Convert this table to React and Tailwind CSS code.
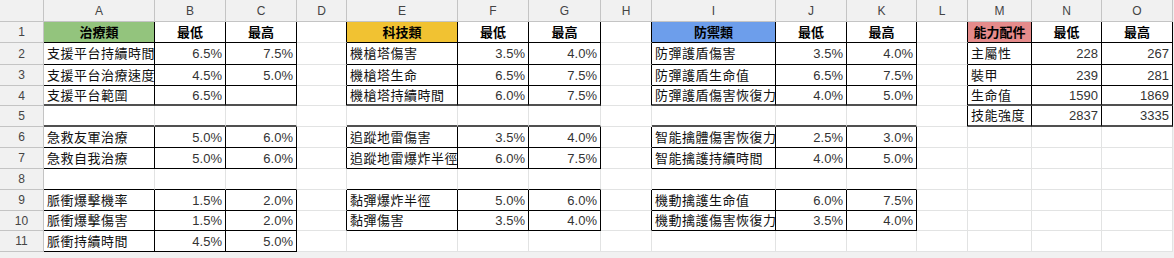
import React from "react";

const COLS = ["A", "B", "C", "D", "E", "F", "G", "H", "I", "J", "K", "L", "M", "N", "O"];

// [colStart, colEnd, rowStart, rowEnd]
const BLOCKS = [
  [0, 2, 1, 4],
  [0, 2, 6, 7],
  [0, 2, 9, 11],
  [4, 6, 1, 4],
  [4, 6, 6, 7],
  [4, 6, 9, 10],
  [8, 10, 1, 4],
  [8, 10, 6, 7],
  [8, 10, 9, 10],
  [12, 14, 1, 5],
];

const inBlock = (c, r) =>
  BLOCKS.some(([c0, c1, r0, r1]) => c >= c0 && c <= c1 && r >= r0 && r <= r1);

const HEAD_BG = {
  A1: "bg-[#93c47d]",
  E1: "bg-[#f1c232]",
  I1: "bg-[#6d9eeb]",
  M1: "bg-[#e58b8b]",
};

const rowsData = {
  1: ["治療類", "最低", "最高", "", "科技類", "最低", "最高", "", "防禦類", "最低", "最高", "", "能力配件", "最低", "最高"],
  2: ["支援平台持續時間", "6.5%", "7.5%", "", "機槍塔傷害", "3.5%", "4.0%", "", "防彈護盾傷害", "3.5%", "4.0%", "", "主屬性", "228", "267"],
  3: ["支援平台治療速度", "4.5%", "5.0%", "", "機槍塔生命", "6.5%", "7.5%", "", "防彈護盾生命值", "6.5%", "7.5%", "", "裝甲", "239", "281"],
  4: ["支援平台範圍", "6.5%", "", "", "機槍塔持續時間", "6.0%", "7.5%", "", "防彈護盾傷害恢復力", "4.0%", "5.0%", "", "生命值", "1590", "1869"],
  5: ["", "", "", "", "", "", "", "", "", "", "", "", "技能強度", "2837", "3335"],
  6: ["急救友軍治療", "5.0%", "6.0%", "", "追蹤地雷傷害", "3.5%", "4.0%", "", "智能擒體傷害恢復力", "2.5%", "3.0%", "", "", "", ""],
  7: ["急救自我治療", "5.0%", "6.0%", "", "追蹤地雷爆炸半徑", "6.0%", "7.5%", "", "智能擒護持續時間", "4.0%", "5.0%", "", "", "", ""],
  8: [],
  9: ["脈衝爆擊機率", "1.5%", "2.0%", "", "黏彈爆炸半徑", "5.0%", "6.0%", "", "機動擒護生命值", "6.0%", "7.5%", "", "", "", ""],
  10: ["脈衝爆擊傷害", "1.5%", "2.0%", "", "黏彈傷害", "3.5%", "4.0%", "", "機動擒護傷害恢復力", "3.5%", "4.0%", "", "", "", ""],
  11: ["脈衝持續時間", "4.5%", "5.0%", "", "", "", "", "", "", "", "", "", "", "", ""],
};

const Cell = ({ c, r }) => {
  const text = (rowsData[r] || [])[c] || "";
  const here = inBlock(c, r);
  const rightBlack = here || inBlock(c + 1, r);
  const bottomBlack = here || inBlock(c, r + 1);
  const thick = bottomBlack && (r === 4 || r === 5);
  const isHead = r === 1 && here;
  const isLabel = c % 4 === 0;
  const bg = HEAD_BG[`${COLS[c]}${r}`] || "bg-white";

  const borders = `border-r ${rightBlack ? "border-r-black" : "border-r-[#e2e3e3]"} ${
    thick
      ? "border-b-2 border-b-[#505050]"
      : bottomBlack
        ? "border-b border-b-black"
        : "border-b border-b-[#e2e3e3]"
  }`;

  const align = isHead
    ? "justify-center font-bold text-black"
    : isLabel
      ? "justify-start pl-[3px] text-[#111] tracking-[0.5px]"
      : "justify-end pr-[3px] text-[#333]";

  return (
    <div
      className={`flex items-center overflow-hidden whitespace-nowrap text-[13px] leading-none ${bg} ${borders} ${align}`}
    >
      {text}
    </div>
  );
};

export default function App() {
  const rows = Array.from({ length: 11 }, (_, i) => i + 1);

  return (
    <div
      className="h-[258px] w-[1174px] overflow-hidden bg-[#f1f1f1]"
      style={{ fontFamily: '"Liberation Sans", "Noto Sans CJK TC", sans-serif' }}
    >
      <div className="grid grid-cols-[44px_111px_71px_71px_50px_111px_71px_72px_51px_124px_71px_70px_51px_64px_70px_71px] grid-rows-[22px_21px_22px_21px_20px_21px_21px_21px_21px_21px_20px_21px]">
        <div className="border-b border-r border-[#c4c4c4] bg-[#f1f1f1]" />
        {COLS.map((col) => (
          <div
            key={col}
            className="flex items-center justify-center border-b border-r border-[#c4c4c4] bg-[#f1f1f1] text-[12px] text-[#444]"
          >
            {col}
          </div>
        ))}

        {rows.map((r) => (
          <React.Fragment key={r}>
            <div className="flex items-center justify-center border-b border-r border-[#c4c4c4] bg-[#f1f1f1] text-[12px] text-[#444]">
              {r}
            </div>
            {COLS.map((col, c) => (
              <Cell key={col} c={c} r={r} />
            ))}
          </React.Fragment>
        ))}
      </div>
    </div>
  );
}
